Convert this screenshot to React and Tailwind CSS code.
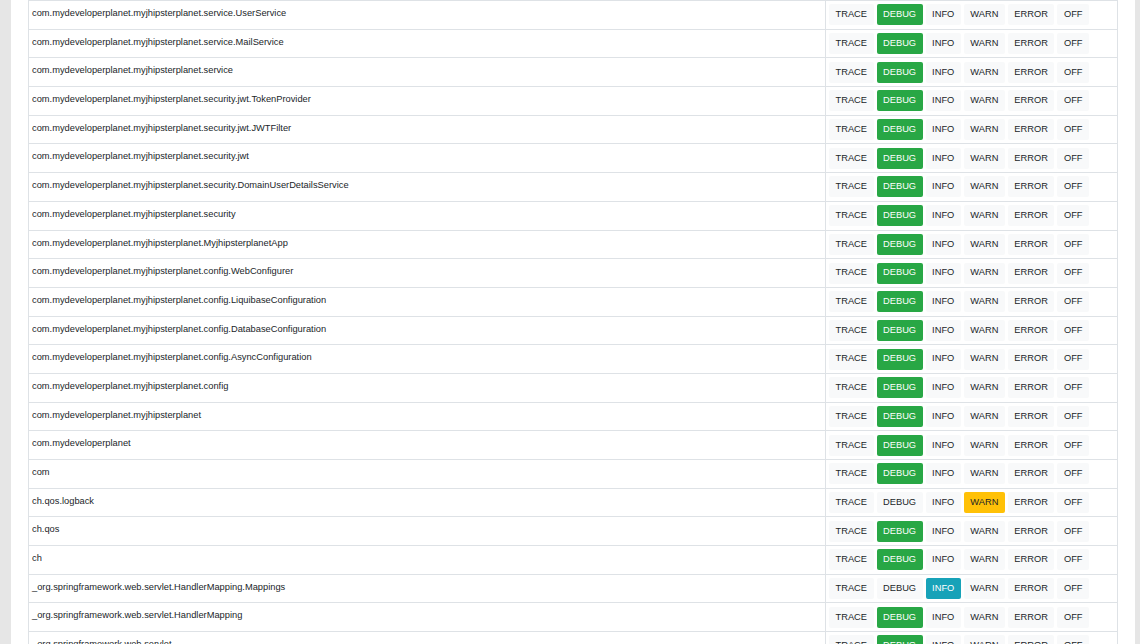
import React from 'react';

const base = 'com.mydeveloperplanet.myjhipsterplanet';

const loggers = [
  { name: `${base}.service.UserService`, level: 'DEBUG' },
  { name: `${base}.service.MailService`, level: 'DEBUG' },
  { name: `${base}.service`, level: 'DEBUG' },
  { name: `${base}.security.jwt.TokenProvider`, level: 'DEBUG' },
  { name: `${base}.security.jwt.JWTFilter`, level: 'DEBUG' },
  { name: `${base}.security.jwt`, level: 'DEBUG' },
  { name: `${base}.security.DomainUserDetailsService`, level: 'DEBUG' },
  { name: `${base}.security`, level: 'DEBUG' },
  { name: `${base}.MyjhipsterplanetApp`, level: 'DEBUG' },
  { name: `${base}.config.WebConfigurer`, level: 'DEBUG' },
  { name: `${base}.config.LiquibaseConfiguration`, level: 'DEBUG' },
  { name: `${base}.config.DatabaseConfiguration`, level: 'DEBUG' },
  { name: `${base}.config.AsyncConfiguration`, level: 'DEBUG' },
  { name: `${base}.config`, level: 'DEBUG' },
  { name: base, level: 'DEBUG' },
  { name: 'com.mydeveloperplanet', level: 'DEBUG' },
  { name: 'com', level: 'DEBUG' },
  { name: 'ch.qos.logback', level: 'WARN' },
  { name: 'ch.qos', level: 'DEBUG' },
  { name: 'ch', level: 'DEBUG' },
  { name: '_org.springframework.web.servlet.HandlerMapping.Mappings', level: 'INFO' },
  { name: '_org.springframework.web.servlet.HandlerMapping', level: 'DEBUG' },
  { name: '_org.springframework.web.servlet', level: 'DEBUG' },
];

const levels = ['TRACE', 'DEBUG', 'INFO', 'WARN', 'ERROR', 'OFF'];

const activeStyle = {
  TRACE: 'bg-[#007bff] text-white',
  DEBUG: 'bg-[#28a745] text-white',
  INFO: 'bg-[#17a2b8] text-white',
  WARN: 'bg-[#ffc107] text-[#212529]',
  ERROR: 'bg-[#dc3545] text-white',
  OFF: 'bg-[#6c757d] text-white',
};

const LevelButton = ({ label, active }) => (
  <button
    className={`h-[21px] px-[6.5px] rounded-[2px] text-[9.3px] leading-none ${
      active ? activeStyle[label] : 'bg-[#f8f9fa] text-[#212529]'
    }`}
  >
    {label}
  </button>
);

const App = () => {
  return (
    <div className="min-h-screen bg-[#e6e6e6] pl-[11px] pr-[5px] font-['Liberation_Sans',Arial,sans-serif]">
      <div className="bg-white h-[644px] overflow-hidden pl-[17px] pr-[17px]">
        <div className="border-x border-t border-[#dee2e6]">
          {loggers.map((logger) => (
            <div key={logger.name} className="flex h-[28.7px] border-b border-[#dee2e6]">
              <div className="w-[797px] shrink-0 pl-[3px] pt-[7px] text-[9.3px] leading-[11px] text-[#212529] border-r border-[#dee2e6]">
                {logger.name}
              </div>
              <div className="flex-1 flex items-center gap-[3px] pl-[3px]">
                {levels.map((lvl) => (
                  <LevelButton key={lvl} label={lvl} active={lvl === logger.level} />
                ))}
              </div>
            </div>
          ))}
        </div>
      </div>
    </div>
  );
};

export default App;
